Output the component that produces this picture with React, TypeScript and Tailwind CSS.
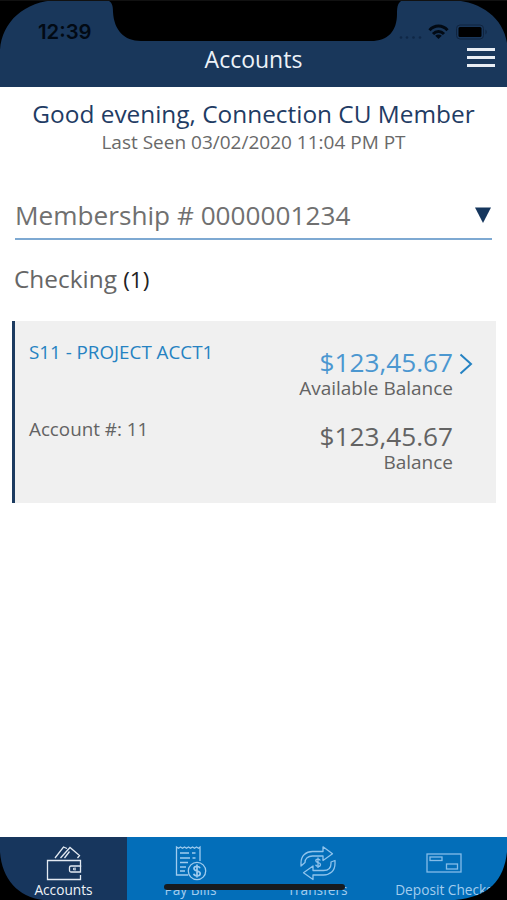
import type { ReactNode } from 'react';

const WalletIcon = () => (
    <svg width="36" height="36" viewBox="0 0 36 36" fill="none" stroke="#e3eaf2" strokeWidth="1.3">
        <path d="M34.500 22V15.500H1.500V34.500H34.500V30" />
        <path d="M34.500 21H25a1.500 1.500 0 0 0-1.500 1.500v3a1.500 1.500 0 0 0 1.500 1.500H34.500z" />
        <path d="M30 23.200h-2.500v1.600H30" strokeWidth="1" />
        <path d="M9 13L17.500 2l3.500 1.500M14.500 13L24 2.500l9.500 8-2 2.500M23.500 6.500L18.500 13" />
    </svg>
);

const BillIcon = () => (
    <svg width="32" height="36" viewBox="0 0 32 36" fill="none" stroke="#9fcbee" strokeWidth="1.3">
        <path d="M13 30H1.500V2l2 1.200 2-1.200 2 1.200 2-1.200 2 1.200 2-1.200 2 1.200 2-1.200 2 1.200 2-1.200 2 1.200 1.500-1.200V16" />
        <path d="M5 8h9M17 8H20.500M5 13h10M17.500 13H20.500M5 17.500h8M5 22h6M5 26h5" strokeWidth="1.6" />
        <circle cx="22" cy="26" r="8.700" />
        <path d="M25 23.200c-.4-1.300-1.500-1.900-3-1.900-1.800 0-3 .9-3 2.300 0 3.300 6.200 1.500 6.200 4.800 0 1.500-1.300 2.400-3.200 2.400-1.700 0-2.900-.7-3.300-2M22 19.500v13" strokeWidth="1.7" />
    </svg>
);

const TransferIcon = () => (
    <svg width="38" height="36" viewBox="0 0 38 36" fill="none" stroke="#8fc3ec" strokeWidth="1.3" strokeLinejoin="round">
        <path d="M2 21V18C2 10.500 7 6.500 13.500 6.500H24V1.800l9.500 7-9.500 6.700v-4.500H13.500C9 11 6 13.500 6 17.500L2 21z" />
        <path d="M36 15.500V18.500c0 7.500-5 11.500-11.500 11.500H14V34.500l-9.500-6.700L14 21v4.500h10.500C29 25.500 32 23 32 18.500v-1.500z" />
        <path d="M21.300 15.500c-.4-1-1.100-1.400-2.200-1.400-1.400 0-2.300.6-2.300 1.700 0 2.400 4.700 1.200 4.700 3.700 0 1.200-.9 1.900-2.400 1.900-1.300 0-2.200-.6-2.500-1.600M19 12.500v10.400" />
    </svg>
);

const CheckIcon = () => (
    <svg width="36" height="20" viewBox="0 0 36 20" fill="none" stroke="#84bce8" strokeWidth="1.3">
        <rect x="1" y="1" width="34" height="18" />
        <rect x="4" y="4" width="12" height="3.500" />
        <rect x="20.500" y="11" width="11" height="5" />
    </svg>
);

type NavItemProps = {
    label: string;
    icon: ReactNode;
    active?: boolean;
};

const NavItem = ({ label, icon, active }: NavItemProps) => (
    <button
        className={
            active
                ? 'flex flex-col items-center overflow-hidden bg-[#17365d] text-[#eef3f8]'
                : 'flex flex-col items-center overflow-hidden bg-[#036eb9] text-[#a3cdee]'
        }
    >
        <span className="flex h-[43px] items-center pt-[8px]">{icon}</span>
        <span className="whitespace-nowrap text-[13.7px] leading-[20px]">{label}</span>
    </button>
);

const Header = () => (
    <header className="relative h-[87px] bg-[#19375b]">
        <svg className="absolute inset-0" width="507" height="87" viewBox="0 0 507 87">
            <path d="M0 0H58C24 1 2 22 0 50zM507 0H453C482 2 503 18 507 43z" fill="#000" />
            <path d="M107 0C112 2 113 5 113 12C114 30 124 41 141 41H371C388 41 397 31 397 14C397 6 398 2 403 0z" fill="#000" />
            <path d="M0 0H507V1H0z" fill="#111" />
            {/* no signal dots */}
            <g fill="#0f2746">
                <circle cx="401" cy="37.500" r="1.300" />
                <circle cx="407" cy="37.500" r="1.300" />
                <circle cx="413.500" cy="37.500" r="1.300" />
                <circle cx="420" cy="37.500" r="1.300" />
            </g>
            <g fill="none" stroke="#020a14" strokeWidth="3">
                <path d="M429.500 30.200C434.500 24.700 442.500 24.700 447.500 30.200" />
                <path d="M433 34C436.200 30.700 440.800 30.700 444 34" />
            </g>
            <path d="M438.500 39L435.200 35.700C437 34.200 440 34.200 441.800 35.700z" fill="#020a14" />
            <rect x="456.500" y="25" width="27" height="14" rx="3.500" fill="none" stroke="#10243f" />
            <rect x="458.500" y="27" width="23" height="10" rx="1.500" fill="#000" />
            <path d="M485.500 29.500q2.500 2.500 0 5z" fill="#10243f" />
        </svg>
        <span className="absolute left-[38px] top-[20px] font-['Inter'] text-[20.3px] font-semibold leading-[24px] text-[#020a14]">12:39</span>
        <h1 className="relative pt-[43px] text-center text-[23px] leading-[32px] text-[#edf2f8]">Accounts</h1>
        <button className="absolute left-[467px] top-[48px] flex w-[28px] flex-col gap-[5px]">
            <span className="h-[3px] bg-[#e8edf4]" />
            <span className="h-[3px] bg-[#e8edf4]" />
            <span className="h-[3px] bg-[#e8edf4]" />
        </button>
    </header>
);

const AccountCard = () => (
    <section className="ml-[12px] mr-[11px] mt-[23px] flex h-[182px] justify-between border-l-[3px] border-[#1c3b60] bg-[#f0f0f0] pl-[14px] pr-[23px]">
        <div className="flex flex-col whitespace-nowrap pt-[17px] leading-[28px]">
            <span className="text-[18.8px] text-[#2582c2]">S11 - PROJECT ACCT1</span>
            <span className="mt-[49px] text-[18.8px] text-[#636363]">Account #: 11</span>
        </div>
        <div className="flex whitespace-nowrap pt-[25px] text-right text-[#636363]">
            <div className="flex flex-col">
                <span className="text-[26.2px] leading-[32px] text-[#4b97d0]">$123,45.67</span>
                <span className="text-[19px] leading-[20px]">Available Balance</span>
                <span className="mt-[22px] text-[26.2px] leading-[32px]">$123,45.67</span>
                <span className="text-[19px] leading-[20px]">Balance</span>
            </div>
            <svg className="ml-[6px] mt-[7px]" width="14" height="22" viewBox="0 0 14 22" fill="none" stroke="#2582c2" strokeWidth="2">
                <path d="M1.500 1.500L12 11L1.500 20.500" />
            </svg>
        </div>
    </section>
);

const App = () => {
    return (
        <div className="relative flex h-[900px] w-[507px] flex-col overflow-hidden bg-white font-['Open_Sans',sans-serif]">
            <Header />

            <main className="flex-1">
                <div className="whitespace-nowrap pt-[13px] text-center">
                    <h2 className="text-[24.4px] leading-[28px] text-[#1f3c64]">Good evening, Connection CU Member</h2>
                    <p className="text-[19px] leading-[28px] text-[#696969]">Last Seen 03/02/2020 11:04 PM PT</p>
                </div>

                <div className="mx-[15px] mt-[38px] flex h-[46px] justify-between border-b-2 border-[#7ea9d2]">
                    <span className="whitespace-nowrap text-[26.2px] leading-[42px] text-[#707070]">Membership # 0000001234</span>
                    <svg className="mt-[13px]" width="17" height="17" viewBox="0 0 17 17">
                        <path d="M0 0.500H16L8 16z" fill="#15365d" />
                    </svg>
                </div>

                <h3 className="ml-[14px] mt-[21px] text-[24.4px] leading-[36px] text-[#666]">
                    Checking <span className="text-[22.5px] text-[#222]">(1)</span>
                </h3>

                <AccountCard />
            </main>

            <nav className="grid h-[63px] grid-cols-[127px_127px_127px_126px]">
                <NavItem label="Accounts" icon={<WalletIcon />} active />
                <NavItem label="Pay Bills" icon={<BillIcon />} />
                <NavItem label="Transfers" icon={<TransferIcon />} />
                <NavItem label="Deposit Checks" icon={<CheckIcon />} />
            </nav>

            {/* home indicator and rounded screen corners */}
            <div className="absolute bottom-[10px] left-[164px] h-[6px] w-[181px] rounded-full bg-[#161b20]" />
            <svg className="absolute bottom-0 left-0" width="507" height="50" viewBox="0 0 507 50">
                <path d="M0 2C2 29 18 47 43 50H0zM507 2C504 30 489 47 455 50H507z" fill="#000" />
            </svg>
        </div>
    );
};

export default App;
